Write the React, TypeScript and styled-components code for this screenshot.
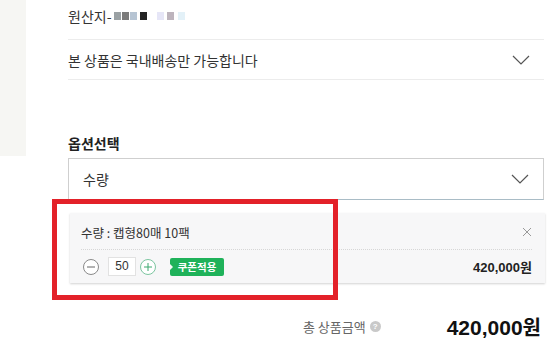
import React from "react";
import styled, { createGlobalStyle } from "styled-components";

const GlobalStyle = createGlobalStyle`
  body {
    margin: 0;
    background: #fff;
    font-family: "Noto Sans CJK KR", "Noto Sans", sans-serif;
    color: #333;
  }
`;

const Page = styled.div`
  display: flex;
  align-items: flex-start;
  width: 550px;
  height: 344px;
  overflow: hidden;
`;

const Aside = styled.div`
  width: 26px;
  height: 156px;
  background: #f6f6f3;
  flex-shrink: 0;
`;

const Main = styled.div`
  margin-left: 42px;
  width: 476px;
  display: flex;
  flex-direction: column;
`;

const InfoRow = styled.div<{ $padTop?: number }>`
  height: 40px;
  box-sizing: border-box;
  padding-top: ${(p) => p.$padTop ?? 0}px;
  display: flex;
  align-items: ${(p) => (p.$padTop ? "flex-start" : "center")};
  justify-content: space-between;
  border-bottom: 1px solid #ececec;
  font-size: 14px;
  line-height: 20px;
  color: #333;
`;

const Pixels = styled.span`
  display: inline-flex;
  align-items: center;
  margin-left: 2px;
  height: 20px;
  vertical-align: top;
`;

const Pixel = styled.span<{ $color: string; $gap?: number }>`
  display: inline-block;
  width: 7px;
  height: 8px;
  margin-left: ${(p) => p.$gap ?? 1}px;
  background: ${(p) => p.$color};
`;

const Chevron = styled.svg`
  width: 18px;
  height: 10px;
  margin-right: 14px;
  flex-shrink: 0;
`;

const OptionLabel = styled.div`
  margin-top: 53px;
  font-size: 14px;
  line-height: 20px;
  font-weight: 700;
  color: #222;
`;

const Select = styled.div`
  margin-top: 5px;
  height: 42px;
  box-sizing: border-box;
  border: 1px solid #cfcfcf;
  border-bottom-color: #a9bcc6;
  padding-left: 14px;
  display: flex;
  align-items: center;
  justify-content: space-between;
  font-size: 14px;
  color: #333;
`;

const OptionArea = styled.div`
  position: relative;
  margin-top: 13px;
  margin-left: 2px;
  margin-right: -1px;
`;

const Highlight = styled.div`
  position: absolute;
  left: -18px;
  top: -14px;
  width: 286px;
  height: 101px;
  box-sizing: border-box;
  border: 5px solid #e32129;
  pointer-events: none;
`;

const ItemBox = styled.div`
  height: 70px;
  box-sizing: border-box;
  background: #f7f7f8;
  box-shadow: 0 1px 2px rgba(0, 0, 0, 0.18);
  padding: 10px 13px 0 11px;
`;

const ItemTitle = styled.div`
  display: flex;
  align-items: center;
  justify-content: space-between;
  height: 18px;
  font-size: 12.5px;
  color: #333;
  padding-bottom: 8px;
  border-bottom: 1px dotted #d6d6d6;
`;

const CloseIcon = styled.svg`
  width: 10px;
  height: 10px;
`;

const QtyRow = styled.div`
  display: flex;
  align-items: center;
  height: 19px;
  margin-top: 7px;
`;

const RoundButton = styled.span<{ $tone: string }>`
  width: 16px;
  height: 16px;
  box-sizing: border-box;
  border-radius: 50%;
  border: 1px solid ${(p) => p.$tone};
  background: #fff;
  display: flex;
  align-items: center;
  justify-content: center;
  flex-shrink: 0;
`;

const QtyInput = styled.span`
  width: 28px;
  height: 19px;
  box-sizing: border-box;
  border: 1px solid #e2e2e2;
  background: #fff;
  margin: 0 4px 0 9px;
  font-size: 12px;
  line-height: 17px;
  text-align: center;
  color: #333;
  font-family: "Liberation Sans", sans-serif;
`;

const CouponTag = styled.span`
  position: relative;
  margin-left: 14px;
  width: 54px;
  height: 18px;
  background: #1fb25a;
  border-radius: 2px;
  color: #fff;
  font-size: 10.5px;
  font-weight: 700;
  line-height: 18px;
  text-align: center;

  &::before {
    content: "";
    position: absolute;
    left: 0;
    top: 6px;
    border-left: 3px solid #f7f7f8;
    border-top: 3px solid transparent;
    border-bottom: 3px solid transparent;
  }
`;

const ItemPrice = styled.span`
  margin-left: auto;
  font-size: 13px;
  font-weight: 700;
  color: #222;
`;

const Digits = styled.span<{ $size: number }>`
  font-family: "Liberation Sans", sans-serif;
  font-size: ${(p) => p.$size}px;
  font-weight: 700;
`;

const TotalRow = styled.div`
  margin-top: 28px;
  height: 30px;
  display: flex;
  align-items: center;
  justify-content: flex-end;
  padding-right: 3px;
`;

const TotalLabel = styled.span`
  font-size: 13px;
  color: #666;
`;

const HelpIcon = styled.span`
  width: 11px;
  height: 11px;
  margin-left: 4px;
  border-radius: 50%;
  background: #c9c9c9;
  color: #fff;
  font-size: 8px;
  font-weight: 700;
  line-height: 11px;
  text-align: center;
  font-family: "Liberation Sans", sans-serif;
`;

const TotalPrice = styled.span`
  margin-left: 66px;
  font-size: 20px;
  font-weight: 700;
  color: #111;
  display: flex;
  align-items: baseline;
`;

const pixels = [
  { color: "#9aa1a4", gap: 0 },
  { color: "#7b7b7b" },
  { color: "#b6c4d3" },
  { color: "#242424", gap: 3 },
  { color: "#e6e6f7", gap: 10 },
  { color: "#bdb4bd", gap: 3 },
  { color: "#e3f1f8", gap: 4 },
];

const ChevronDown = () => (
  <Chevron viewBox="0 0 18 10">
    <polyline points="1,1 9,9 17,1" fill="none" stroke="#555" strokeWidth="1.2" />
  </Chevron>
);

const App = () => {
  return (
    <>
      <GlobalStyle />
      <Page>
        <Aside />
        <Main>
          <InfoRow $padTop={6}>
            <span>
              원산지-
              <Pixels>
                {pixels.map((px, i) => (
                  <Pixel key={i} $color={px.color} $gap={px.gap} />
                ))}
              </Pixels>
            </span>
          </InfoRow>
          <InfoRow>
            <span>본 상품은 국내배송만 가능합니다</span>
            <ChevronDown />
          </InfoRow>

          <OptionLabel>옵션선택</OptionLabel>
          <Select>
            <span>수량</span>
            <ChevronDown />
          </Select>

          <OptionArea>
            <ItemBox>
              <ItemTitle>
                <span>수량 : 캡형80매 10팩</span>
                <CloseIcon viewBox="0 0 10 10">
                  <path d="M1 1L9 9M9 1L1 9" stroke="#999" strokeWidth="1" />
                </CloseIcon>
              </ItemTitle>
              <QtyRow>
                <RoundButton $tone="#8a8a8a" style={{ marginLeft: 2 }}>
                  <svg width="8" height="8" viewBox="0 0 8 8">
                    <path d="M0 4H8" stroke="#666" strokeWidth="1" />
                  </svg>
                </RoundButton>
                <QtyInput>50</QtyInput>
                <RoundButton $tone="#7cc6a0">
                  <svg width="8" height="8" viewBox="0 0 8 8">
                    <path d="M0 4H8M4 0V8" stroke="#3aa86e" strokeWidth="1" />
                  </svg>
                </RoundButton>
                <CouponTag>쿠폰적용</CouponTag>
                <ItemPrice>
                  <Digits $size={13}>420,000</Digits>원
                </ItemPrice>
              </QtyRow>
            </ItemBox>
            <Highlight />
          </OptionArea>

          <TotalRow>
            <TotalLabel>총 상품금액</TotalLabel>
            <HelpIcon>?</HelpIcon>
            <TotalPrice>
              <Digits $size={21}>420,000</Digits>원
            </TotalPrice>
          </TotalRow>
        </Main>
      </Page>
    </>
  );
};

export default App;
